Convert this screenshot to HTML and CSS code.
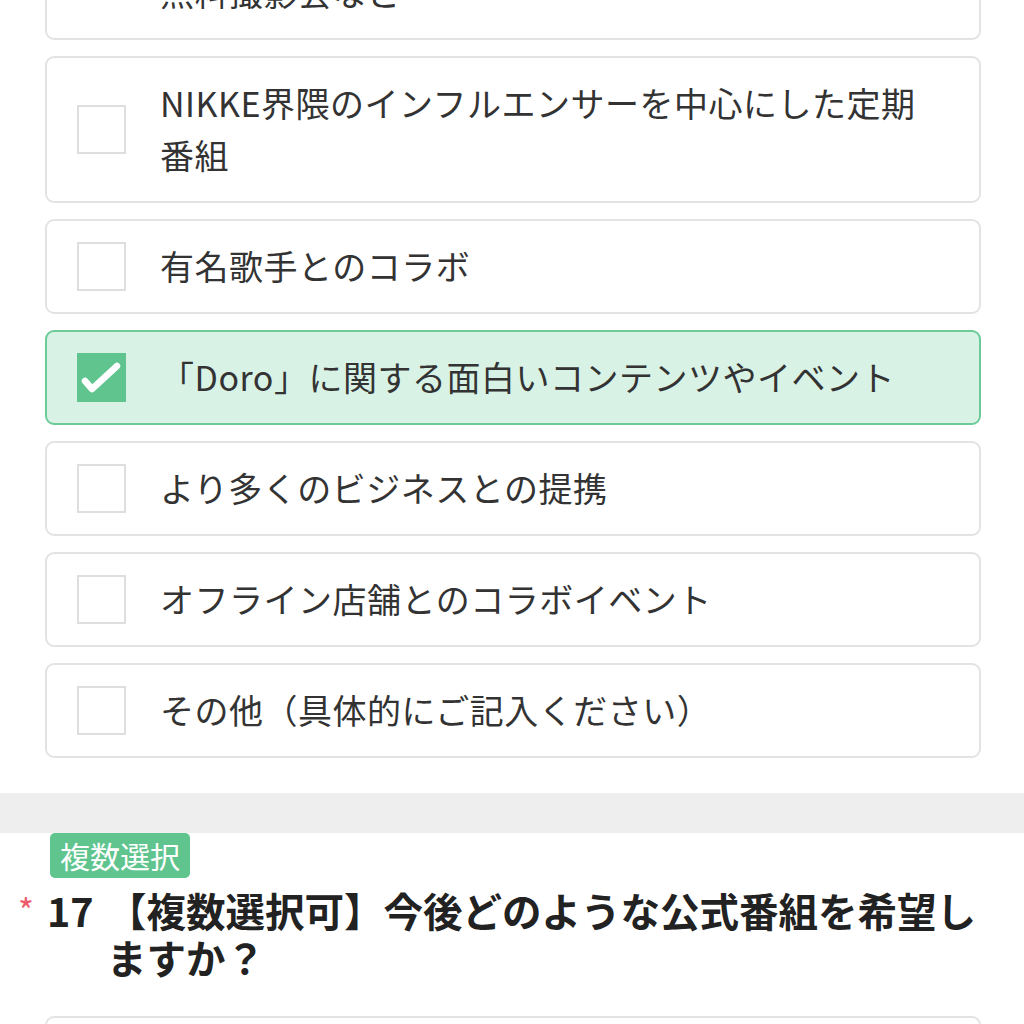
FILE: index.html
```html
<!DOCTYPE html>
<html lang="ja">
<head>
<meta charset="utf-8">
<link rel="stylesheet" href="styles.css">
</head>
<body>
<div class="options options-top">
  <div class="opt"><span class="box"></span><span class="label">オフラインイベント、ファンミーティング、<br>無料撮影会など</span></div>
  <div class="opt"><span class="box"></span><span class="label">NIKKE界隈のインフルエンサーを中心にした定期番組</span></div>
  <div class="opt"><span class="box"></span><span class="label">有名歌手とのコラボ</span></div>
  <div class="opt checked"><span class="box"><svg viewBox="0 0 49 49" width="49" height="49"><path d="M8 28 L15 36 L40 13" fill="none" stroke="#fff" stroke-width="6.5" stroke-linecap="round" stroke-linejoin="round"/></svg></span><span class="label">「Doro」に関する面白いコンテンツやイベント</span></div>
  <div class="opt"><span class="box"></span><span class="label">より多くのビジネスとの提携</span></div>
  <div class="opt"><span class="box"></span><span class="label">オフライン店舗とのコラボイベント</span></div>
  <div class="opt"><span class="box"></span><span class="label">その他（具体的にご記入ください）</span></div>
</div>
<div class="divider"></div>
<div class="question">
  <span class="tag">複数選択</span>
  <div class="qtitle">
    <span class="req">*</span>
    <span class="qnum">17</span>
    <span class="qtext">【複数選択可】今後どのような公式番組を希望しますか？</span>
  </div>
  <div class="options">
    <div class="opt"><span class="box"></span><span class="label">&nbsp;</span></div>
  </div>
</div>
</body>
</html>
```
FILE: styles.css
```css
html, body {
  margin: 0;
  padding: 0;
  background: #fff;
  overflow: hidden;
}
body {
  font-family: "Noto Sans CJK JP", "Noto Sans", sans-serif;
  color: #333;
  width: 1024px;
  height: 1024px;
}
.options {
  display: flex;
  flex-direction: column;
  gap: 16px;
  margin-left: 45px;
  width: 936px;
}
.options-top {
  margin-top: -107px;
}
.opt {
  display: flex;
  align-items: center;
  gap: 34px;
  padding: 19px 42px 20px 30px;
  border: 2px solid #e3e3e3;
  border-radius: 9px;
  background: #fff;
}
.box {
  flex: 0 0 auto;
  width: 49px;
  height: 49px;
  box-sizing: border-box;
  border: 2px solid #dedede;
  background: #fff;
}
.box svg { display: block; }
.label {
  font-size: 34px;
  line-height: 52px;
  letter-spacing: 0.5px;
  color: #333;
}
.opt.checked {
  background: #d9f2e6;
  border-color: #6ccb99;
}
.opt.checked .box {
  background: #5fc48e;
  border: none;
}
.divider {
  margin-top: 35px;
  height: 40px;
  background: #eeeeee;
}
.tag {
  display: inline-block;
  margin-left: 50px;
  padding: 0 10px;
  height: 45px;
  line-height: 45px;
  font-size: 30px;
  color: #fff;
  background: #5fc48e;
  border-radius: 5px;
}
.qtitle {
  display: flex;
  align-items: flex-start;
  margin-top: 8px;
  padding-right: 20px;
  font-size: 39.5px;
  line-height: 47px;
  font-weight: bold;
  color: #222;
}
.req {
  width: 47px;
  box-sizing: border-box;
  padding-left: 18px;
  color: #ee5a6b;
  font-weight: normal;
  font-size: 34px;
}
.qnum {
  width: 60px;
  flex: 0 0 auto;
}
.qtext {
  flex: 1;
}
.question .options {
  margin-top: 36px;
}
```
